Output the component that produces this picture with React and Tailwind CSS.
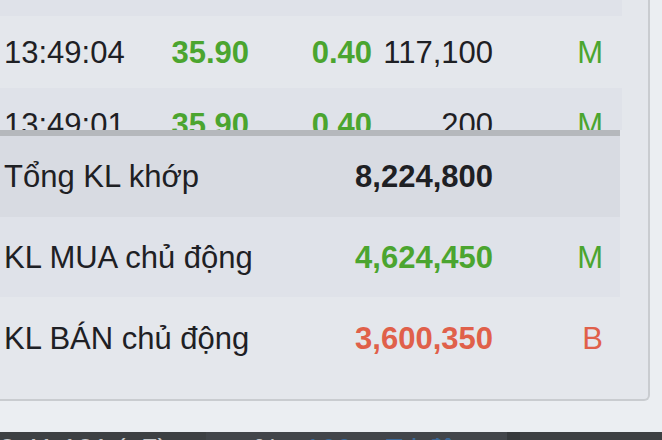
import React from "react";

const font = { fontFamily: '"Liberation Sans", Arial, sans-serif' };

function TradeRow({ time, price, change, vol, side, bg }) {
  return (
    <div className={`flex items-center h-[72px] w-[622px] whitespace-nowrap ${bg}`}>
      <div className="w-[150px] pl-[4px] text-[#1e2024]">{time}</div>
      <div className="w-[99px] text-right font-bold text-[#4ba52f]">{price}</div>
      <div className="w-[123px] text-right font-bold text-[#4ba52f]">{change}</div>
      <div className="w-[121px] text-right text-[#1e2024]">{vol}</div>
      <div className="w-[110px] text-right text-[#4ba52f]">{side}</div>
    </div>
  );
}

function SumRow({ label, value, valueColor, side, sideColor, bg, h }) {
  return (
    <div className={`flex items-center w-[620px] whitespace-nowrap ${h} ${bg}`}>
      <div className="w-[343px] pl-[4px] text-[#1e2024]">{label}</div>
      <div className={`w-[150px] text-right font-bold ${valueColor}`}>{value}</div>
      <div className={`w-[110px] text-right ${sideColor}`}>{side}</div>
    </div>
  );
}

export default function App() {
  return (
    <div
      className="w-[662px] h-[440px] overflow-hidden bg-[#ebeef2] flex flex-col text-[31px] leading-none"
      style={font}
    >
      <div className="w-[650px] h-[401px] shrink-0 bg-[#e4e7ec] border-r-2 border-b-2 border-[#c9ccd0] rounded-br-[6px] flex flex-col">
        <div className="h-[130px] overflow-hidden shrink-0">
          <div className="-mt-[56px]">
            <TradeRow time="13:49:05" price="35.90" change="0.40" vol="1,000" side="M" bg="bg-[#dfe2e9]" />
            <TradeRow time="13:49:04" price="35.90" change="0.40" vol="117,100" side="M" bg="bg-[#e4e7ec]" />
            <TradeRow time="13:49:01" price="35.90" change="0.40" vol="200" side="M" bg="bg-[#dfe2e9]" />
          </div>
        </div>
        <div className="h-[6px] w-[620px] bg-[#b5b8bc] shrink-0" />
        <SumRow
          label="Tổng KL khớp"
          value="8,224,800"
          valueColor="text-[#1e2024]"
          side=""
          sideColor=""
          bg="bg-[#d8dbe2]"
          h="h-[81px]"
        />
        <SumRow
          label="KL MUA chủ động"
          value="4,624,450"
          valueColor="text-[#4ba52f]"
          side="M"
          sideColor="text-[#4ba52f]"
          bg="bg-[#dfe2e9]"
          h="h-[80px]"
        />
        <SumRow
          label="KL BÁN chủ động"
          value="3,600,350"
          valueColor="text-[#e0604a]"
          side="B"
          sideColor="text-[#e0604a]"
          bg=""
          h="h-[82px]"
        />
      </div>
      <div className="mt-[31px] h-[30px] shrink-0 bg-[#3d4043] flex items-start overflow-hidden text-[28px]">
        <div className="w-[222px] pt-[3px] -ml-[16px] text-[#c4c6c9] whitespace-nowrap">80 41 101 (+7)</div>
        <div className="w-[301px] bg-[#42454a] h-full flex pt-[3px] whitespace-nowrap">
          <span className="ml-[48px] text-[#c4c6c9]">%</span>
          <span className="ml-[26px] text-[#3b6a9a]">166</span>
          <span className="ml-[34px] text-[#3b6a9a]">Tri động</span>
        </div>
        <div className="w-[13px] h-full bg-[#35383b]" />
      </div>
    </div>
  );
}
